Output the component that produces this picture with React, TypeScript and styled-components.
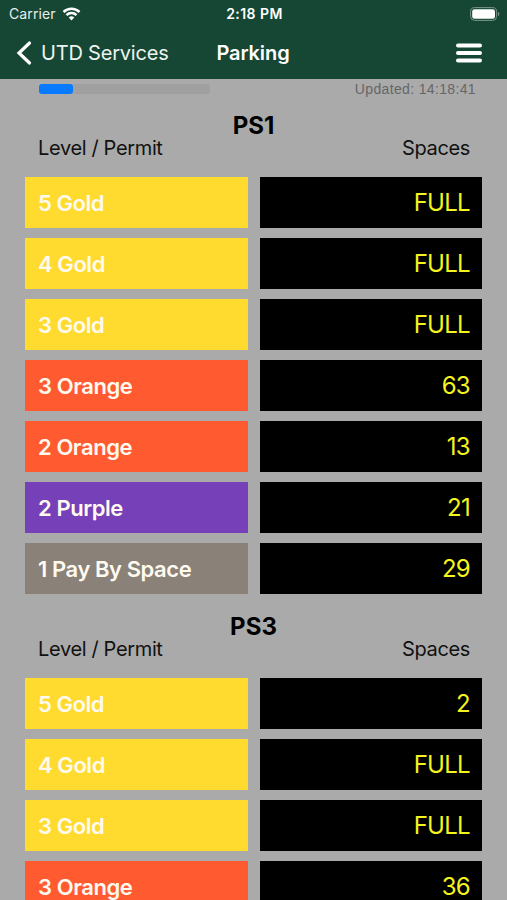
import * as React from "react";
import styled, { createGlobalStyle } from "styled-components";

const GlobalStyle = createGlobalStyle`
  * {
    box-sizing: border-box;
  }
  body {
    margin: 0;
    overflow: hidden;
    background: #aaaaaa;
    font-family: Inter, Roboto, sans-serif;
  }
`;

const colors = {
  gold: "#ffdb30",
  orange: "#ff5a30",
  purple: "#7540b8",
  pay: "#8a8178",
};

const SScreen = styled.div`
  width: 507px;
  height: 900px;
  overflow: hidden;
  background: #aaaaaa;
`;

const SHeader = styled.header`
  height: 79px;
  background: #154734;
  color: #fff;
`;

const SColumns = styled.div`
  display: grid;
  grid-template-columns: 1fr auto 1fr;
  align-items: center;
`;

const SStatusBar = styled(SColumns)`
  height: 27px;
  padding: 0 7px 0 9px;
  font-size: 14px;
`;

const SCarrier = styled.div`
  display: flex;
  align-items: center;
  gap: 6px;
  color: #e8eeeb;
  letter-spacing: 0.1px;
`;

const STime = styled.div`
  font-weight: 600;
  letter-spacing: 0.45px;
`;

const SBattery = styled.svg`
  justify-self: end;
`;

const SNavBar = styled(SColumns)`
  height: 51px;
  padding: 0 17px 0 16px;
  font-size: 20px;
`;

const SBack = styled.div`
  display: flex;
  align-items: center;
  gap: 9px;
  color: #eef3f0;
  letter-spacing: -0.2px;
`;

const STitle = styled.div`
  font-weight: 600;
  letter-spacing: -0.1px;
`;

const SMenu = styled.svg`
  justify-self: end;
  margin-right: 7px;
`;

const SUpdateRow = styled.div`
  height: 20px;
  display: flex;
  align-items: center;
  justify-content: space-between;
  padding: 0 31px 0 39px;
  font-family: "Liberation Sans", Arial, sans-serif;
  font-size: 14px;
  letter-spacing: 0.35px;
  color: #666;
`;

const STrack = styled.div`
  width: 171px;
  height: 10px;
  border-radius: 3px;
  background: #a0a0a0;
`;

const SProgress = styled.div`
  width: 34px;
  height: 10px;
  border-radius: 3px;
  background: #087aff;
`;

const SGarage = styled.section`
  padding: 0 25px;
  & + & {
    margin-top: 6px;
  }
`;

const SGarageName = styled.h2`
  margin: 0;
  padding-top: 12px;
  height: 41px;
  font-size: 24px;
  line-height: 29px;
  text-align: center;
  color: #000;
`;

const SLabels = styled.div`
  display: flex;
  justify-content: space-between;
  height: 37px;
  padding: 0 12px 0 13px;
  color: #111;
  font-size: 20px;
  line-height: 16px;
  letter-spacing: -0.35px;
`;

const SRows = styled.div`
  display: grid;
  gap: 10px;
`;

const SRow = styled.div`
  display: grid;
  grid-template-columns: 1fr 1fr;
  gap: 12px;
  height: 51px;
`;

const SPermit = styled.div<{ $color: string }>`
  display: flex;
  align-items: center;
  padding-left: 13px;
  background: ${({ $color }) => $color};
  color: #fffaf0;
  font-size: 22px;
  font-weight: 600;
  letter-spacing: -0.43px;
`;

const SSpaces = styled.div`
  display: flex;
  align-items: center;
  justify-content: flex-end;
  padding-right: 12px;
  background: #000;
  color: #f4f41e;
  font-size: 24px;
  letter-spacing: -0.7px;
`;

interface Level {
  permit: string;
  color: string;
  spaces: string;
}

interface GarageProps {
  name: string;
  levels: Level[];
}

const garages: GarageProps[] = [
  {
    name: "PS1",
    levels: [
      { permit: "5 Gold", color: colors.gold, spaces: "FULL" },
      { permit: "4 Gold", color: colors.gold, spaces: "FULL" },
      { permit: "3 Gold", color: colors.gold, spaces: "FULL" },
      { permit: "3 Orange", color: colors.orange, spaces: "63" },
      { permit: "2 Orange", color: colors.orange, spaces: "13" },
      { permit: "2 Purple", color: colors.purple, spaces: "21" },
      { permit: "1 Pay By Space", color: colors.pay, spaces: "29" },
    ],
  },
  {
    name: "PS3",
    levels: [
      { permit: "5 Gold", color: colors.gold, spaces: "2" },
      { permit: "4 Gold", color: colors.gold, spaces: "FULL" },
      { permit: "3 Gold", color: colors.gold, spaces: "FULL" },
      { permit: "3 Orange", color: colors.orange, spaces: "36" },
    ],
  },
];

const Garage = ({ name, levels }: GarageProps) => (
  <SGarage>
    <SGarageName>{name}</SGarageName>
    <SLabels>
      <span>Level / Permit</span>
      <span>Spaces</span>
    </SLabels>
    <SRows>
      {levels.map(({ permit, color, spaces }) => (
        <SRow key={permit}>
          <SPermit $color={color}>{permit}</SPermit>
          <SSpaces>{spaces}</SSpaces>
        </SRow>
      ))}
    </SRows>
  </SGarage>
);

const App = () => (
  <SScreen>
    <GlobalStyle />
    <SHeader>
      <SStatusBar>
        <SCarrier>
          Carrier
          <svg width="19" height="14" viewBox="0 0 18 14" fill="none" stroke="#fff" strokeWidth="2.5">
            <path d="M1 5a11.5 11.5 0 0 1 16 0M4 8.2a7 7 0 0 1 10 0" />
            <path d="M9 13.4 6.2 10.6a4 4 0 0 1 5.6 0z" fill="#fff" stroke="none" />
          </svg>
        </SCarrier>
        <STime>2:18 PM</STime>
        <SBattery width="30" height="14" viewBox="0 0 30 14">
          <rect x="0.6" y="0.6" width="26" height="12.8" rx="4" fill="none" stroke="#7d988c" />
          <rect x="2.2" y="2.2" width="22.8" height="9.6" rx="2.2" fill="#fff" />
          <path d="M28 4.8c1.8.8 1.8 3.6 0 4.4z" fill="#7d988c" />
        </SBattery>
      </SStatusBar>
      <SNavBar>
        <SBack>
          <svg width="16" height="26" viewBox="0 0 16 26" fill="none" stroke="#fff" strokeWidth="3.2">
            <path d="M13.5 3 3 13l10.500 10" strokeLinecap="round" strokeLinejoin="miter" />
          </svg>
          UTD Services
        </SBack>
        <STitle>Parking</STitle>
        <SMenu width="28" height="20" viewBox="0 0 28 20" stroke="#fff" strokeWidth="4" strokeLinecap="round">
          <path d="M3 2.500h22M3 10h22M3 17.500h22" />
        </SMenu>
      </SNavBar>
    </SHeader>
    <SUpdateRow>
      <STrack>
        <SProgress />
      </STrack>
      <span>Updated: 14:18:41</span>
    </SUpdateRow>
    {garages.map((garage) => (
      <Garage key={garage.name} {...garage} />
    ))}
  </SScreen>
);

export default App;
